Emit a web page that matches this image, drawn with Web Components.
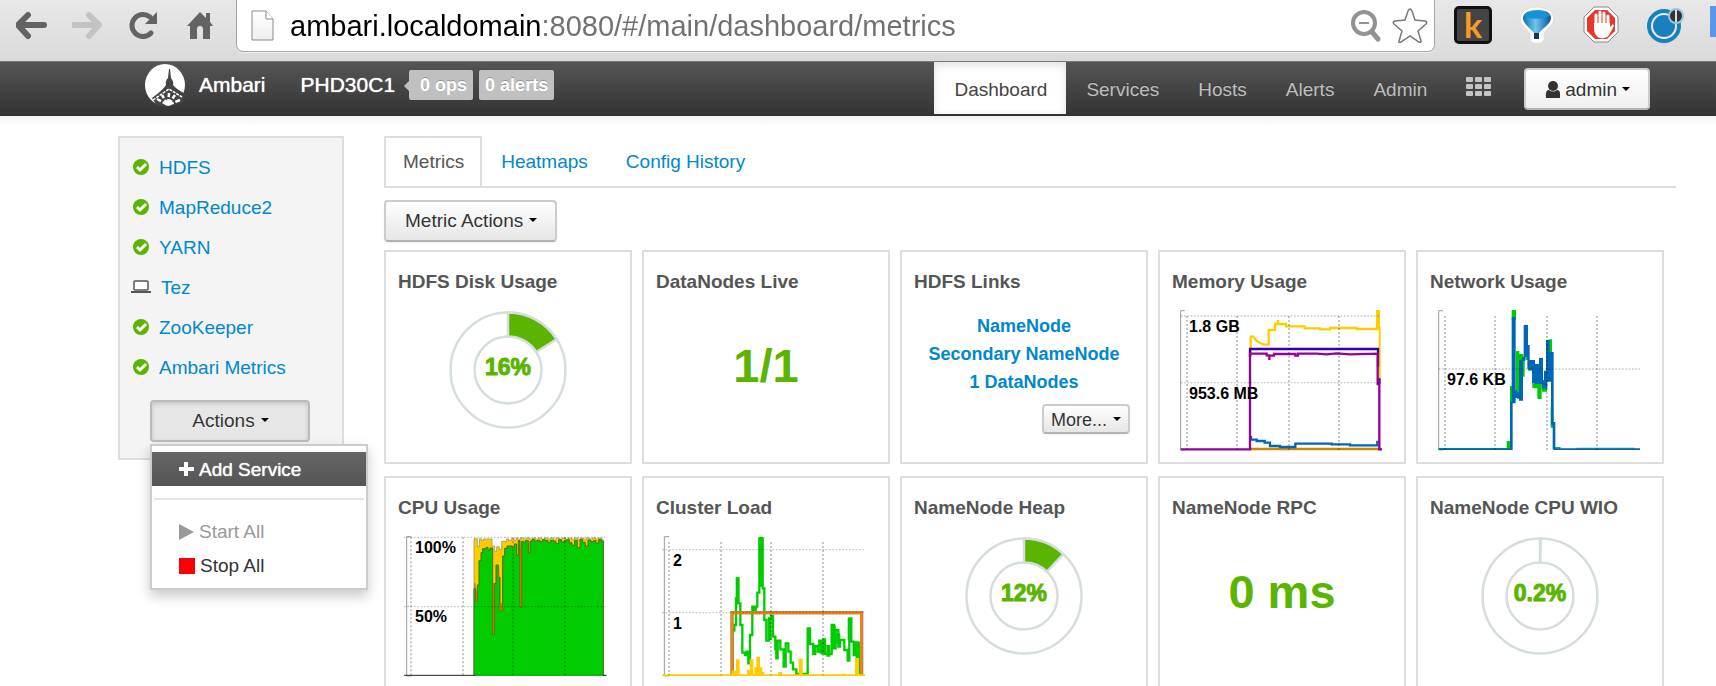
<!DOCTYPE html>
<html lang="en">
<head>
<meta charset="utf-8">
<title>Ambari - PHD30C1</title>
<style>
html{scrollbar-width:none;background:#fff}
body{margin:0;overflow-x:hidden;font:19px/24px "Liberation Sans",Arial,sans-serif;color:#333}
.page{display:flex;align-items:flex-start;gap:40px;padding:20px 40px 0 118px;background:linear-gradient(#f3f3f3,#fff 10px)}
.main{flex:1;min-width:0}
.toolbar{padding:12px 0 8px}
.grid{display:grid;grid-template-columns:repeat(5,minmax(0,1fr));gap:12px 10px;padding-right:12px}
</style>
</head>
<body>
<browser-bar></browser-bar>
<ambari-nav cluster="PHD30C1"></ambari-nav>
<div class="page">
  <service-panel>
    <service-item state="ok">HDFS</service-item>
    <service-item state="ok">MapReduce2</service-item>
    <service-item state="ok">YARN</service-item>
    <service-item state="client">Tez</service-item>
    <service-item state="ok">ZooKeeper</service-item>
    <service-item state="ok">Ambari Metrics</service-item>
    <action-menu slot="menu"></action-menu>
  </service-panel>
  <main class="main">
    <tab-strip></tab-strip>
    <div class="toolbar"><caret-button>Metric Actions</caret-button></div>
    <div class="grid">
      <metric-card heading="HDFS Disk Usage"><donut-gauge value="16"></donut-gauge></metric-card>
      <metric-card heading="DataNodes Live"><big-number>1/1</big-number></metric-card>
      <metric-card heading="HDFS Links"><link-list></link-list></metric-card>
      <metric-card heading="Memory Usage"><memory-chart></memory-chart></metric-card>
      <metric-card heading="Network Usage"><network-chart></network-chart></metric-card>
      <metric-card heading="CPU Usage"><cpu-chart></cpu-chart></metric-card>
      <metric-card heading="Cluster Load"><load-chart></load-chart></metric-card>
      <metric-card heading="NameNode Heap"><donut-gauge value="12"></donut-gauge></metric-card>
      <metric-card heading="NameNode RPC"><big-number>0 ms</big-number></metric-card>
      <metric-card heading="NameNode CPU WIO"><donut-gauge value="0.2"></donut-gauge></metric-card>
    </div>
  </main>
</div>
<script>
function define(name, render) {
  customElements.define(name, class extends HTMLElement {
    constructor() { super(); this.attachShadow({mode: 'open'}); }
    connectedCallback() { this.shadowRoot.innerHTML = '<style>*{box-sizing:border-box}</style>' + render(this); }
  });
}

define('browser-bar', () => `
<style>
:host{display:flex;align-items:flex-start;height:62px;box-sizing:border-box;border-bottom:1px solid #777;background:linear-gradient(#e8e8e8,#dadada);overflow:hidden}
button{border:0;background:none;padding:0;display:block;flex:none}
svg{display:block}
.nav{display:flex;gap:24px;padding:8px 20px 0 16px;flex:none}
.nav button{width:32px;height:36px}
.address{flex:1;min-width:0;display:flex;align-items:center;height:52px;padding:0 6px 0 14px;background:#fff;border:1px solid #a4a4a4;border-top:0;border-radius:0 0 7px 7px;box-shadow:0 1px 0 #f2f2f2}
input{flex:1;min-width:0;height:48px;margin:0 12px 0 15px;padding:0;border:0;outline:0;font:29px/48px "Liberation Sans",Arial,sans-serif;color:#707070;-webkit-text-fill-color:transparent;background:linear-gradient(90deg,#000 252px,#707070 252px);-webkit-background-clip:text;background-clip:text}
.tools{display:flex;gap:10px;flex:none}
.ext{display:flex;gap:26px;padding:6px 0 0 19px;flex:none}
.ext button{width:38px;height:38px}
.ext .k{background:#444;border:3px solid #111;border-radius:5px;color:#f79a2a;font:bold 34px/30px Lato,"Liberation Sans",sans-serif}
.ext .cut{width:6px;height:31px;background:#5b97e8}
</style>
<div class="nav">
<button aria-label="Back"><svg width="32" height="36"><path d="M12 7 2 17 12 28M3 17H28" fill="none" stroke="#636363" stroke-width="6" stroke-linecap="round" stroke-linejoin="round"/></svg></button>
<button aria-label="Forward"><svg width="32" height="36"><path d="M17 7 27 17 17 28M26 17H2" fill="none" stroke="#c3c3c3" stroke-width="6" stroke-linecap="round" stroke-linejoin="round"/></svg></button>
<button aria-label="Reload"><svg width="32" height="36"><path d="M23 25A11 11 0 1 1 22 9" fill="none" stroke="#636363" stroke-width="5" stroke-linecap="round"/><path d="M29 4V16H17Z" fill="#636363"/></svg></button>
<button aria-label="Home"><svg width="32" height="36"><path d="M16 4 22 10V5H26V14L29 18H26V31H19V21A3 3 0 0 0 13 21V31H6V18H3Z" fill="#636363"/></svg></button>
</div>
<div class="address">
<svg width="24" height="32"><defs><linearGradient id="p" x2="0" y2="1"><stop stop-color="#fff"/><stop offset="1" stop-color="#eee"/></linearGradient></defs><path d="M1 1H15L22 9V30H1Z" fill="url(#p)" stroke="#8a8a8a"/><path d="M15 1V9H22" fill="#fff" stroke="#8a8a8a"/></svg>
<input aria-label="Address" spellcheck="false" value="ambari.localdomain:8080/#/main/dashboard/metrics">
<div class="tools">
<button aria-label="Zoom"><svg width="32" height="36"><circle cx="14" cy="15" r="11" fill="none" stroke="#929292" stroke-width="4"/><path d="M9 15H19" stroke="#929292" stroke-width="2"/><path d="M22 24 28 31" stroke="#929292" stroke-width="5" stroke-linecap="round"/></svg></button>
<button aria-label="Bookmark"><svg width="36" height="36"><path d="M18 1Q19 1 20 3L23 12L33 13Q36 14 34 16L26 23L29 33Q29 35 27 34L18 28L9 34Q6 35 7 33L10 23L2 16Q0 14 3 13L13 12L16 3Q17 1 18 1Z" fill="#fff" stroke="#777" stroke-width="1.5"/></svg></button>
</div>
</div>
<div class="ext">
<button class="k">k</button>
<button aria-label="Balloon"><svg width="38" height="38"><defs><linearGradient id="b"><stop stop-color="#0b6fb5"/><stop offset=".45" stop-color="#6fc6f2"/><stop offset="1" stop-color="#06549c"/></linearGradient></defs><path d="M19 1C29 1 36 6 36 13C36 20 26 24 26 28V34C24 39 13 38 12 34V28C12 24 1 20 2 12C3 5 10 1 19 1Z" fill="#fff" stroke="#ddd"/><path d="M19 4C27 4 33 6 33 12C33 18 24 23 21 27V33H16V27C13 23 5 18 5 12C5 7 11 4 19 4Z" fill="url(#b)"/><path d="M6 9C10 3 28 3 32 9C28 14 10 14 6 9Z" fill="#1592d6"/><path d="M16 27H21V33H16Z" fill="#16365e"/></svg></button>
<button aria-label="Ad blocker"><svg width="38" height="38"><path d="M12 1H26L36 11V26L26 36H12L2 26V11Z" fill="#fff" stroke="#888"/><path d="M13 4H25L33 12V25L25 33H13L5 25V12Z" fill="#e8362c"/><path d="M14 18V9M18 17V6M22 17V7M26 19V10" stroke="#fff" stroke-width="3" stroke-linecap="round"/><path d="M12 17H28V21L31 18 32 20 27 29Q24 33 18 32Q12 30 12 22Z" fill="#fff"/></svg></button>
<button aria-label="Sync"><svg width="38" height="38"><circle cx="18" cy="20" r="15" fill="#e6eef4" stroke="#1a80bd" stroke-width="4"/><circle cx="18" cy="20" r="11" fill="#1a80bd"/><circle cx="30" cy="10" r="7" fill="#333" stroke="#9cc4de" stroke-width="2"/><path d="M30 4V16" stroke="#ddd" stroke-width="2"/></svg></button>
<button class="cut" aria-label="More extensions"></button>
</div>`);

define('ambari-nav', el => `
<style>
:host{display:flex;align-items:center;height:54px;padding:0 66px 0 145px;background:linear-gradient(#555,#333);color:#fff;text-shadow:0 -1px 0 rgba(0,0,0,.25)}
a{color:inherit;text-decoration:none}
.brand{display:flex;align-items:center;font-size:21px;height:46px;align-self:flex-start;text-shadow:0 0 1px #fff}
.brand svg{margin-right:14px}
.cluster{margin:0 14px 0 35px}
.badges{display:flex;gap:6px;align-self:flex-start;padding-top:8px}
.badge{position:relative;background:#c0c0c0;border-radius:2px;font-weight:bold;font-size:18px;line-height:30px;padding:0 6px}
.ops{padding-left:11px}
.ops::before{content:"";position:absolute;left:-5px;top:11px;border:5px solid transparent;border-right-color:#c0c0c0;border-left:0}
nav{display:flex;align-self:flex-start;margin-left:auto}
nav a{display:flex;align-items:center;height:52px;padding:4px 19px 0 20px;color:#bfbfbf}
nav a.on{background:#fff;color:#444;text-shadow:none;box-shadow:inset 0 3px 8px rgba(0,0,0,.125)}
nav .apps{padding:0 32px 2px 20px}
</style>
<a class="brand" href="#/main"><svg width="40" height="42"><ellipse cx="20" cy="21" rx="20" ry="21" fill="#fff"/><path d="M24 5H25L26 14Q29 18 28 21Q31 25 39 29L38 38L27 42H12L7 34Q18 26 21 21Q20 17 23 14Z" fill="#444"/><path d="M8 36 24 25 37 33" fill="none" stroke="#fff" stroke-width="1.5" stroke-dasharray="3 1"/><path d="M23 41 12 35M23 41 17 31M23 41 24 29M23 41 30 31M23 41 35 36" stroke="#fff" stroke-width="2.5" stroke-dasharray="6 2"/></svg>Ambari</a>
<a class="brand cluster" href="#/main/cluster">${el.getAttribute('cluster')}</a>
<div class="badges"><a class="badge ops" href="#/ops">0 ops</a><a class="badge" href="#/alerts">0 alerts</a></div>
<nav><a class="on" href="#/main/dashboard">Dashboard</a><a href="#/main/services">Services</a><a href="#/main/hosts">Hosts</a><a href="#/main/alerts">Alerts</a><a href="#/main/admin">Admin</a>
<a class="apps" href="#/views" aria-label="Views"><svg width="26" height="20" fill="#c4c4c4">${[0, 7, 14].map(y => [0, 9, 18].map(x => `<rect x="${x}" y="${y}" width="7" height="5" rx="1"/>`).join('')).join('')}</svg></a></nav>
<caret-button kind="user">admin</caret-button>`);

define('caret-button', el => `
<style>
:host{display:inline-block;vertical-align:top}
button{display:flex;align-items:center;justify-content:center;gap:6px;width:100%;height:42px;padding:0 18px 0 19px;border:2px solid #ccc;border-bottom-color:#b3b3b3;border-radius:4px;background:linear-gradient(#fff,#e6e6e6);font:inherit;color:#333;text-shadow:0 1px 1px rgba(255,255,255,.75);white-space:nowrap;box-shadow:0 1px 2px rgba(0,0,0,.05)}
:host([kind=user]) button{gap:5px;padding-top:2px;background:linear-gradient(#fff,#f0f0f0)}
:host([kind=small]) button{font-size:18px;height:30px;padding:2px 7px 0}
:host([kind=open]) button{background:#e6e6e6;border-color:#bbb;box-shadow:inset 0 2px 4px rgba(0,0,0,.15)}
i{border:4px solid transparent;border-top-color:#000;border-bottom:0;margin-bottom:2px}
</style>
<button>${el.getAttribute('kind') === 'user' ? '<svg width="15" height="18" fill="#333"><circle cx="8" cy="5" r="5"/><path d="M1 17Q0 9 4 9Q8 12 12 9Q16 9 15 17Z"/></svg>' : ''}<slot></slot><i></i></button>`);

define('service-panel', () => `
<style>
:host{display:block;width:226px;box-sizing:border-box;flex:none;border:2px solid #ddd;background:#f4f4f4;padding:9px 0 16px}
nav{padding-bottom:13px}
</style>
<nav aria-label="Services"><slot></slot></nav><slot name="menu"></slot>`);

define('service-item', el => `
<style>
:host{display:flex;align-items:center;height:40px;padding-left:11px}
a{color:#08c;text-decoration:none;padding-top:2px}
svg{flex:none;width:20px;margin-right:8px}
:host([state=client]) svg{margin-right:10px}
</style>
${el.getAttribute('state') === 'ok'
  ? '<svg height="18"><circle cx="10" cy="9" r="8" fill="#5ab400"/><path d="M6 9 9 12 15 6" fill="none" stroke="#fff" stroke-width="3"/></svg>'
  : '<svg height="18"><rect x="3" y="3" width="14" height="9" rx="1" fill="#fff" stroke="#555" stroke-width="1.5"/><path d="M0 13H20V15H0Z" fill="#555"/></svg>'}
<a href="#/main/services"><slot></slot></a>`);

define('action-menu', () => `
<style>
:host{display:block;position:relative;margin-left:30px;width:160px}
caret-button{display:block}
.menu{position:absolute;z-index:2;top:44px;left:0;width:218px;margin:0;padding:6px 0 6px;list-style:none;background:#fff;border:2px solid #ccc;box-shadow:0 6px 12px rgba(0,0,0,.22)}
.menu a{display:flex;align-items:center;gap:5px;height:34px;padding:2px 0 0 27px;color:#333;text-decoration:none}
.menu .on{background:linear-gradient(#666,#555);color:#fff;text-shadow:0 0 1px #fff}
.menu .off{color:#999}
hr{margin:12px 2px 14px;border:0;border-top:2px solid #e5e5e5}
</style>
<caret-button kind="open">Actions</caret-button>
<ul class="menu">
<li><a class="on" href="#/add"><svg width="15" height="16"><path d="M7 0V14M0 7H15" stroke="#fff" stroke-width="4"/></svg>Add Service</a></li>
<li><hr></li>
<li><a class="off" href="#/start"><svg width="15" height="16"><path d="M0 0 15 8 0 16Z" fill="#999"/></svg>Start All</a></li>
<li><a href="#/stop"><svg width="16" height="16"><path d="M0 0H16V16H0Z" fill="red"/></svg>Stop All</a></li>
</ul>`);

define('tab-strip', () => `
<style>
:host{display:flex;height:52px;box-sizing:border-box;border-bottom:2px solid #ddd}
a{display:flex;align-items:center;height:50px;padding:2px 19px 0;color:#08c;text-decoration:none}
.on{padding:0 16px 0 17px;border:2px solid #ddd;border-bottom:0;background:#fff;color:#555}
</style>
<a class="on" href="#/metrics">Metrics</a><a href="#/heatmaps">Heatmaps</a><a href="#/history">Config History</a>`);

define('metric-card', el => `
<style>
:host{display:block;box-sizing:border-box;height:214px;border:2px solid #ddd;background:#fff;padding:18px 12px 0;min-width:0}
h2{margin:0 0 16px;font-size:19px;line-height:24px;color:#555;white-space:nowrap}
</style>
<h2>${el.getAttribute('heading')}</h2><slot></slot>`);

define('big-number', () => `
<style>:host{display:block;text-align:center;font-weight:bold;font-size:47px;line-height:112px;color:#5ab400}</style><slot></slot>`);

define('link-list', () => `
<style>
:host{display:block;text-align:center;font-weight:bold;font-size:18px;line-height:28px;padding-top:2px}
a{display:block;color:#08c;text-decoration:none;white-space:nowrap}
.more{text-align:right;padding:8px 4px 0 0;font-weight:normal}
</style>
<a href="#/nn">NameNode</a><a href="#/snn">Secondary NameNode</a><a href="#/dn">1 DataNodes</a>
<div class="more"><caret-button kind="small">More...</caret-button></div>`);

define('donut-gauge', el => {
  const value = Number(el.getAttribute('value'));
  const angle = value / 100 * 2 * Math.PI;
  const at = r => `${60 + r * Math.sin(angle)} ${60 - r * Math.cos(angle)}`;
  return `
<style>:host{display:flex;justify-content:center}text{font-weight:bold;font-size:23px;fill:#5ab400;stroke:#5ab400}</style>
<svg width="120" height="120">
<g fill="none" stroke="#d6dddf" stroke-width="2.5"><circle cx="60" cy="60" r="57.5"/><circle cx="60" cy="60" r="33.5"/>
<path d="M60 2.5A57.5 57.5 0 0 1 ${at(57.5)}L${at(33.5)}A33.5 33.5 0 0 0 60 26.5Z" ${value > 1 ? 'fill="#5ab400"' : ''}/></g>
<text x="60" y="65" text-anchor="middle">${value}%</text></svg>`;
});

const chartStyle = '<style>:host{display:block;padding-left:6px}svg{display:block}text{font-weight:bold;font-size:16px;fill:#000}</style>';
const grid = (xs, ys, left, top, bottom, right) => `<g stroke="#000" stroke-opacity=".22" fill="none"><path stroke-width="6" stroke-dasharray="6 6" d="${xs.map(x => `M${x} ${top}V${bottom}`).join('')}"/><path stroke-width="4" stroke-dasharray="5 5" d="${ys.map(y => `M${left} ${y}H${right}`).join('')}"/></g>`;
/* Plots are drawn at three units to the pixel. */
const plot = (dx, dy, body, labels) => `${chartStyle}<svg width="206" height="142"><g transform="translate(${-dx} ${-dy}) scale(.33333)">${body}</g>${labels}</svg>`;

define('memory-chart', () => plot(28, 70, `
<path d="M104 212H92V630H104" fill="none" stroke="#999" stroke-width="3"/>
<g fill="none" stroke-width="7">
<path stroke="#c80" d="M300 627H692"/>
<path stroke="#0067b8" d="M303 588V599H320V603H344V608H360V618H390V621H436V611H545V613H600V616H682V602"/>
<path stroke="#fc0" d="M302 350V290H310L318 301 330 309 342 314H356V270H375V252H384V240V252H408V259H464V265H510V268H540V264H620V267H682V211"/>
<path stroke="#fc0" stroke-width="12" d="M684 210V270"/><path stroke="#fc0" stroke-width="6" d="M689 260V420"/>
<path stroke="#30a" d="M300 350V327H684V380M688 415V432"/>
<path stroke="#909" d="M92 628H300V341H350V346H358V360V347H372V342H436V347H444V341H500L530 343 560 340 600 343 683 341V436"/><path stroke="#909" d="M688 420V628H696"/></g>
${grid([111, 261, 417, 567], [228, 428], 92, 228, 630, 692)}`,
'<text x="11" y="22">1.8 GB</text><text x="11" y="89">953.6 MB</text>'));

define('network-chart', () => plot(36, 70, `
<path d="M129 212H116V630H129" fill="none" stroke="#999" stroke-width="3"/>
<path fill="#0c0" d="M335 210H348V240H335ZM320 603H331V628H320ZM330 438H338V490H330ZM348 333H358V460H348ZM356 342H370V366H356ZM368 350H374V410H368ZM377 320H385V360H377ZM384 360H396V392H384ZM397 430H412V445H397ZM412 430H425V477H412ZM426 440H441V455H426ZM446 298H456V340H446ZM452 500H460V563H452ZM462 621H482V626H462ZM530 623H705V626H530ZM116 624H325V628H116Z"/>
<path fill="#0067b8" d="M335 231H347V490H335ZM345 450H352V474H345ZM352 455H358V476H352ZM357 360H369V482H357ZM366 352H376V363H366ZM371 255H384V352H371ZM382 315H389V388H382ZM389 360H405V390H389ZM396 365H405V430H396ZM405 372H417V432H405ZM417 354H429V432H417ZM425 420H440V446H425ZM432 392H442V445H432ZM438 300H449V425H438ZM448 336H461V425H448ZM453 420H461V555H453ZM458 546H466V628H458ZM330 485H338V628H330ZM116 625H338V630H116ZM460 625H720V630H460Z"/>
${grid([135, 285, 441, 591], [387], 116, 228, 630, 720)}`,
'<text x="11" y="75">97.6 KB</text>'));

define('cpu-chart', () => {
  let green = 'M282 616V355H287V395H292V345H297V272H303V248H308V236H318V232H324V240H330V234H338V493H343V340H348V285H355V322H360V422H368V258H374V235H381V228H396V232H403V222H410V256H415V212H420V412H425V214H430V218H436V212H445V248H450V214';
  let top = 'M282 616V206H292V230H298V206H304V212H310V207H336V228H344V244H350V230H358V238H365V214H380V207H386V212H394V206H402V212';
  const dips = [0, 4, 2, 6, 0, 3, 8, 2, 5, 12, 0, 7, 3, 0, 9, 17, 2, 24, 0, 8, 19, 1, 6, 3, 10, 0, 5, 12];
  dips.forEach((d, i) => { if (i < 27) green += `H${456 + i * 8}V${209 + d}`; });
  for (let x = 408; x < 668; x += 6) top += `H${x}V${(x / 6) % 3 ? 204 : 210}`;
  return plot(24, 66, `
<path d="M94 200H80V618H94" fill="none" stroke="#999" stroke-width="3"/>
<path d="${top}H670V616Z" fill="#fc0" stroke="#8a8a5a" stroke-width="2"/>
<path d="${green}H670V616Z" fill="#0c0" stroke="#4a6a1a" stroke-width="3"/>
<path d="M282 340H287V356H282ZM287 362H292V394H287ZM338 340H343V490H338ZM358 398H368V422H358ZM420 230H425V410H420ZM353 300H358V322H353Z" fill="#c60" fill-opacity=".75"/>
<path d="M72 616H680" stroke="#222" stroke-width="3"/><path d="M284 616H669" stroke="#0c0" stroke-width="4"/>
${grid([93, 249, 399, 555], [202, 410], 72, 202, 616, 676)}`,
'<text x="11" y="17">100%</text><text x="11" y="86">50%</text>');
});

define('load-chart', () => plot(27, 66, `
<path d="M102 200H88V618H102" fill="none" stroke="#999" stroke-width="3"/>
<g fill="none">
<path stroke="#0c0" stroke-width="7" d="M293 616V482H298V465H303V385H308V322V400H316V465H322V548H330V555H334V545H340V580H345V495H352V410H358V428H362V410H367V368H373V205H383V355H388V450H394V512H402V445H408V438H414V500H421V538H424V565H428V512H436V538H446V590H452V520H460V545H467V578H474V598H484V612H518V475H525V522H535V552H540V528H548V545H553V512H560V550H565V508H570V552H590V465H597V535H602V480H610V530H615V510H628V540H638V572H643V445H649V515H656V555H661V517H671V560H675V612"/>
<path stroke="#0c0" stroke-width="12" d="M378 200V350M404 446V510M558 512V550M596 465V530M644 445V510M610 490V520M668 520V570M538 525V555M580 525V560M308 322V400"/>
<path stroke="#888" stroke-width="10" d="M291 616V428H680V616"/><path stroke="#ff8000" stroke-width="7" d="M291 616V429H679V616"/></g>
<path fill="#fc0" d="M82 613H690V618H82ZM290 602H303V568H314V616H290ZM336 600H344V568H355V616H336ZM358 592H364V560H375V592H382V606H388V616H358ZM430 606H441V616H430ZM491 566H503V616H491ZM660 564H672V616H660ZM618 611H632V616H618Z"/>
${grid([102, 258, 408, 564], [239, 428], 82, 216, 616, 686)}`,
'<text x="11" y="30">2</text><text x="11" y="93">1</text>'));
</script>
</body>
</html>
